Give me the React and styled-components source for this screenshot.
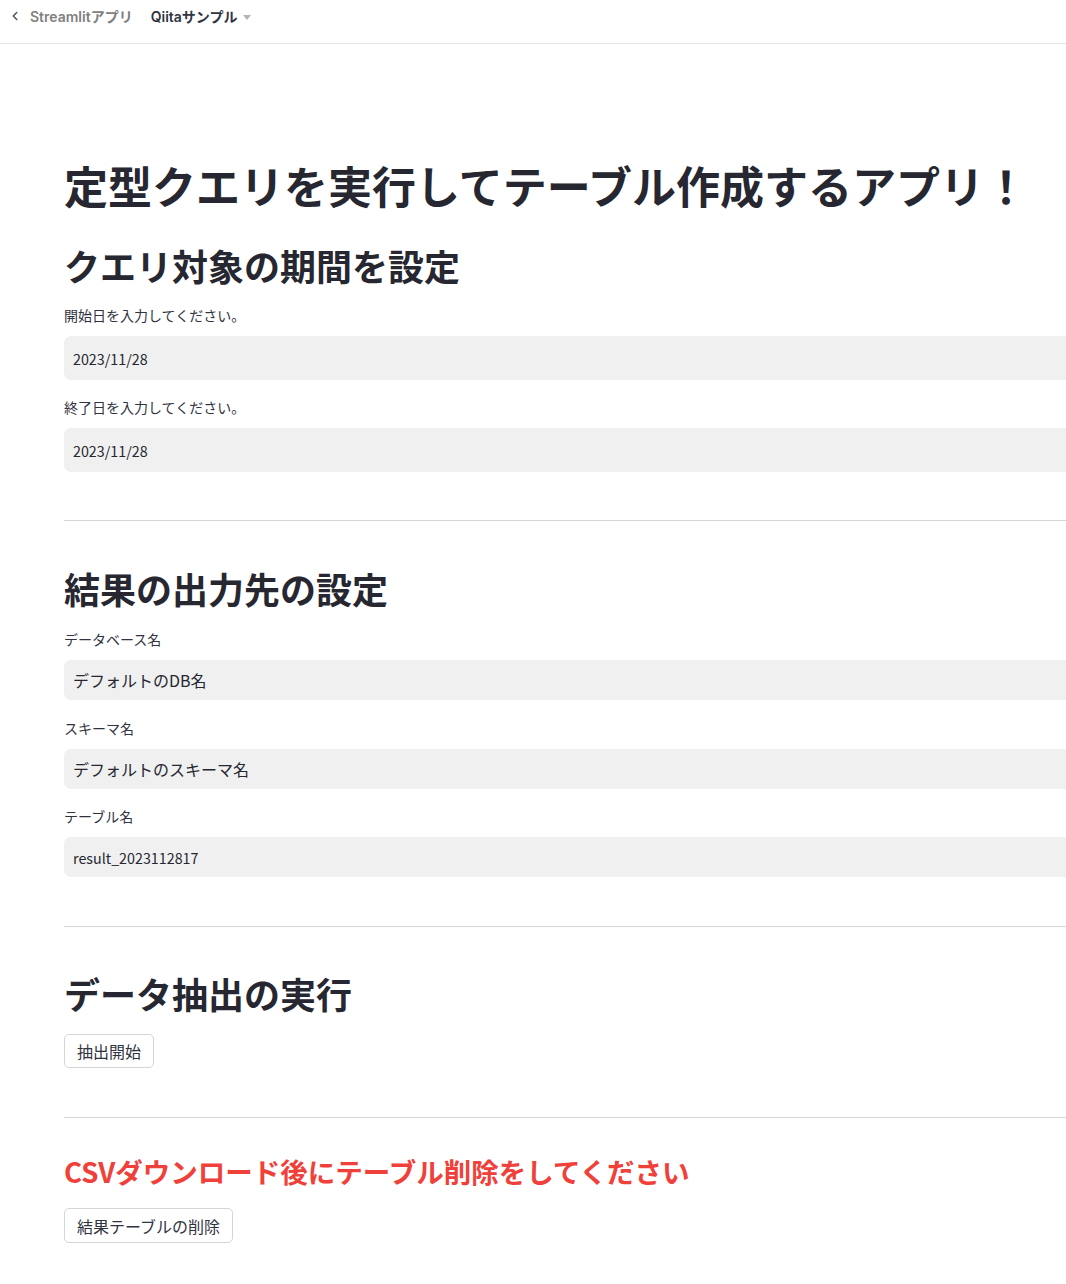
import React from 'react'
import styled, { createGlobalStyle } from 'styled-components'
import { ChevronLeft } from 'lucide-react'

let GlobalStyle = createGlobalStyle`
  html, body {
    margin: 0;
    padding: 0;
    background: #ffffff;
    overflow-x: hidden;
  }
  body {
    font-family: 'Noto Sans CJK JP', 'Noto Sans', sans-serif;
    color: #31333f;
  }
`

let Header = styled.header`
  height: 44px;
  box-sizing: border-box;
  border-bottom: 1px solid #e6e6e6;
  display: flex;
  align-items: flex-start;
  padding: 7px 0 0 8px;
  font-family: Inter, 'Noto Sans CJK JP', sans-serif;
  font-size: 14px;
  font-weight: 600;
`

let Crumb = styled.span`
  display: flex;
  align-items: center;
  height: 18px;
  color: ${p => (p.current ? '#31333f' : '#808080')};
  margin-left: ${p => p.gap || 0}px;
`

let Caret = styled.span`
  width: 0;
  height: 0;
  margin-left: 6px;
  margin-top: 2px;
  border-left: 4px solid transparent;
  border-right: 4px solid transparent;
  border-top: 5px solid #b4b4b4;
`

let Main = styled.main`
  padding: 115px 0 60px 64px;
`

let Title = styled.h1`
  margin: 0;
  font-size: 44px;
  line-height: 52px;
  font-weight: 700;
  color: #262730;
  white-space: nowrap;
`

let Heading = styled.h2`
  margin: ${p => p.top || 0}px 0 0;
  font-size: 36px;
  line-height: 44px;
  font-weight: 700;
  color: #262730;
`

let Warning = styled.h3`
  margin: 35px 0 0;
  font-size: 27.5px;
  line-height: 36px;
  font-weight: 700;
  color: #f0403a;
`

let Label = styled.label`
  display: block;
  margin-top: ${p => p.top}px;
  font-size: 14px;
  line-height: 20px;
  color: #31333f;
`

let Field = styled.div`
  margin-top: 11px;
  height: ${p => p.h}px;
  background: #f0f0f0;
  border-radius: 7px 0 0 7px;
  display: flex;
  align-items: center;
  padding-left: 9px;
  font-size: ${p => (p.latin ? 14.3 : 16)}px;
  color: #262730;
`

let Divider = styled.hr`
  margin: ${p => p.top}px 0 0;
  border: none;
  border-top: 1px solid #d6d6d6;
  height: 0;
`

let Button = styled.button`
  display: block;
  margin-top: ${p => p.top || 17}px;
  height: ${p => p.h || 34}px;
  padding: 0 12px;
  background: #ffffff;
  border: 1px solid #d5d5d8;
  border-radius: 5px;
  font-family: 'Noto Sans CJK JP', sans-serif;
  font-size: 16px;
  color: #31333f;
`

let App = () => (
  <>
    <GlobalStyle />
    <Header>
      <Crumb>
        <ChevronLeft size={14} strokeWidth={2.6} color='#555' />
      </Crumb>
      <Crumb gap={8}>Streamlitアプリ</Crumb>
      <Crumb gap={18} current>
        Qiitaサンプル
        <Caret />
      </Crumb>
    </Header>
    <Main>
      <Title>定型クエリを実行してテーブル作成するアプリ！</Title>
      <Heading top={32}>クエリ対象の期間を設定</Heading>
      <Label top={18}>開始日を入力してください。</Label>
      <Field h={44} latin>2023/11/28</Field>
      <Label top={17}>終了日を入力してください。</Label>
      <Field h={44} latin>2023/11/28</Field>
      <Divider top={48} />

      <Heading top={45}>結果の出力先の設定</Heading>
      <Label top={19}>データベース名</Label>
      <Field h={40}>デフォルトのDB名</Field>
      <Label top={18}>スキーマ名</Label>
      <Field h={40}>デフォルトのスキーマ名</Field>
      <Label top={17}>テーブル名</Label>
      <Field h={40} latin>result_2023112817</Field>
      <Divider top={49} />

      <Heading top={44}>データ抽出の実行</Heading>
      <Button top={19}>抽出開始</Button>
      <Divider top={49} />

      <Warning>CSVダウンロード後にテーブル削除をしてください</Warning>
      <Button top={19} h={35}>結果テーブルの削除</Button>
    </Main>
  </>
)

export default App
